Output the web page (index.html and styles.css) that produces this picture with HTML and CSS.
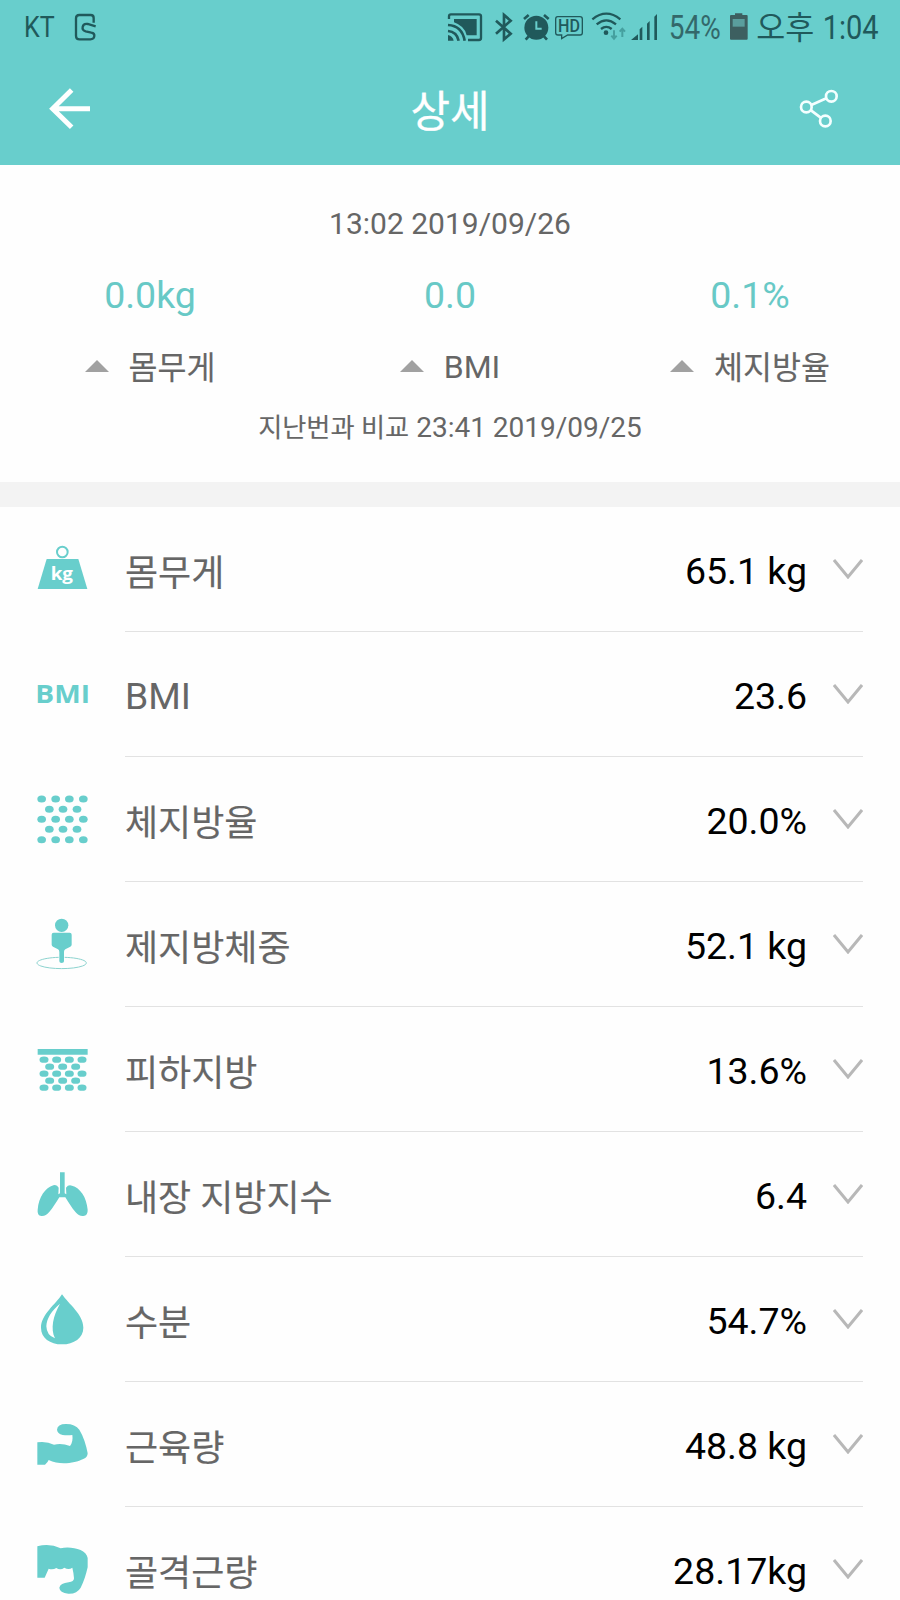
FILE: index.html
```html
<!DOCTYPE html>
<html lang="ko">
<head>
<meta charset="utf-8">
<title>상세</title>
<link rel="stylesheet" href="styles.css">
</head>
<body>
<header class="top">
  <div class="status">
    <svg class="status-left" viewBox="0 0 300 165" width="100" height="55">
      <text x="72" y="112" font-size="90" textLength="92" lengthAdjust="spacingAndGlyphs">KT</text>
      <path class="line" stroke-width="7" d="M281 68V54Q281 45 272 45H238Q228 45 228 55V107Q228 118 239 118H271Q282 118 283 108Q284 100 274 98L257 94Q246 91 248 81Q250 70 263 72L287 79"/>
    </svg>
    <svg class="status-right" viewBox="0 0 1380 165" width="460" height="55">
      <path class="line" stroke-width="7" d="M27 57V49Q27 43 33 43H117Q123 43 123 49V114Q123 120 117 120H84"/>
      <path d="M42 57H110V106H80Q74 78 42 67z"/>
      <path class="line" stroke-width="8" d="M24 75Q66 77 74 122M24 93Q50 95 56 122"/>
      <path d="M24 105Q38 108 41 122H24z"/>
      <path class="line" stroke-width="8" d="M168 62L212 101L192 118V45L212 62L168 101"/>
      <circle cx="289" cy="83" r="36"/>
      <path class="line" stroke-width="8" d="M252 57L266 45M312 45L326 57M266 109L257 119M312 109L321 119"/>
      <path fill="none" stroke="#68cecc" stroke-width="6" d="M289 64V86H305"/>
      <path class="line" stroke-width="4" d="M353 50H420Q427 50 427 57V98Q427 105 420 105H383L365 116V105H354Q347 105 347 98V57Q347 50 353 50z"/>
      <text x="354" y="96" font-size="54" font-weight="500" textLength="66" lengthAdjust="spacingAndGlyphs">HD</text>
      <path class="line" stroke-width="7" d="M457 58Q499 24 541 58M470 73Q499 49 528 73M483 87Q499 74 515 87"/>
      <circle cx="498" cy="98" r="7"/>
      <path class="line traffic" stroke-width="6" d="M522 91V116M514 107L522 116L530 107M547 111V86M539 95L547 86L555 95"/>
      <path d="M573 120L594 103V120zM599 88L607 80V120H599zM621 71L629 63V120H621zM643 50L651 42V120H643z"/>
      <text class="pct" x="686" y="118" font-size="101" textLength="156" lengthAdjust="spacingAndGlyphs">54%</text>
      <path fill="#3d5f60" d="M885 45V40H907V45H920Q923 45 923 48V116Q923 119 920 119H873Q870 119 870 116V48Q870 45 873 45z"/>
      <path fill="#5a9e9d" d="M878 57H914V80H878z"/>
      <text x="949" y="118" font-size="94" textLength="174" lengthAdjust="spacingAndGlyphs">오후</text>
      <text x="1148" y="118" font-size="101" textLength="168" lengthAdjust="spacingAndGlyphs">1:04</text>
    </svg>
  </div>
  <nav class="bar">
    <svg class="back" viewBox="147 264 126 126" width="42" height="42"><path d="M270 326H162M215 270L158 326L215 382"/></svg>
    <h1 class="title">상세</h1>
    <svg class="share" viewBox="417 267 120 120" width="40" height="40"><circle cx="514" cy="289" r="16"/><circle cx="439" cy="321" r="16"/><circle cx="496" cy="363" r="16"/><path d="M454 315L499 295M453 331L482 353"/></svg>
  </nav>
</header>

<section class="summary">
  <p class="time">13:02 2019/09/26</p>
  <div class="deltas">
    <div class="delta"><span class="num">0.0kg</span><span class="name"><i class="up"></i><span class="ko">몸무게</span></span></div>
    <div class="delta"><span class="num">0.0</span><span class="name"><i class="up"></i><span class="en">BMI</span></span></div>
    <div class="delta"><span class="num">0.1%</span><span class="name"><i class="up"></i><span class="ko">체지방율</span></span></div>
  </div>
  <p class="compare"><span class="prev">지난번과 비교</span> 23:41 2019/09/25</p>
</section>

<main class="list">
  <div class="row">
    <svg class="icon" viewBox="48 33 162 162"><circle class="ring" cx="127" cy="66" r="16"/><path d="M80 87H175L202 177H53z"/><text class="kg" x="92" y="150" textLength="67" lengthAdjust="spacingAndGlyphs">kg</text></svg>
    <div class="body"><span class="label">몸무게</span><span class="value">65.1 kg</span><svg class="chev" viewBox="0 0 30 20"><path d="M1 1L15 18L29 1"/></svg></div>
  </div>
  <div class="row">
    <svg class="icon" viewBox="48 33 162 162"><text class="bmi" x="46" y="144" textLength="164" lengthAdjust="spacingAndGlyphs">BMI</text></svg>
    <div class="body"><span class="label latin">BMI</span><span class="value">23.6</span><svg class="chev" viewBox="0 0 30 20"><path d="M1 1L15 18L29 1"/></svg></div>
  </div>
  <div class="row">
    <svg class="icon" viewBox="48 33 162 162">
      <defs><ellipse id="dot" rx="13" ry="10.5"/><ellipse id="cell" rx="13.5" ry="9.6"/>
        <g id="d4"><use href="#dot" x="65"/><use href="#dot" x="107"/><use href="#dot" x="148"/><use href="#dot" x="190"/></g>
        <g id="d3"><use href="#dot" x="88"/><use href="#dot" x="129"/><use href="#dot" x="171"/></g>
        <g id="c4"><use href="#cell" x="72"/><use href="#cell" x="110"/><use href="#cell" x="148"/><use href="#cell" x="186"/></g>
        <g id="c3"><use href="#cell" x="89"/><use href="#cell" x="128"/><use href="#cell" x="167"/></g>
      </defs>
      <use href="#d4" y="57"/><use href="#d3" y="88"/><use href="#d4" y="118"/><use href="#d3" y="148"/><use href="#d4" y="179"/>
    </svg>
    <div class="body"><span class="label">체지방율</span><span class="value">20.0%</span><svg class="chev" viewBox="0 0 30 20"><path d="M1 1L15 18L29 1"/></svg></div>
  </div>
  <div class="row">
    <svg class="icon" viewBox="48 33 162 162"><circle cx="125" cy="61" r="20"/><path d="M101 83H149Q155 83 155 89V119Q155 122 151 125L136 133Q132 135 132 141V169Q132 174 125 174T118 169V141Q118 135 114 133L99 125Q95 122 95 119V89Q95 83 101 83z"/><path class="orbit" d="M116 157A74 17 0 1 0 134 157"/></svg>
    <div class="body"><span class="label">제지방체중</span><span class="value">52.1 kg</span><svg class="chev" viewBox="0 0 30 20"><path d="M1 1L15 18L29 1"/></svg></div>
  </div>
  <div class="row">
    <svg class="icon" viewBox="48 33 162 162"><path d="M53 57H203V74H53z"/><use href="#c4" y="89"/><use href="#c3" y="110"/><use href="#c4" y="131"/><use href="#c3" y="152"/><use href="#c4" y="173"/></svg>
    <div class="body"><span class="label">피하지방</span><span class="value">13.6%</span><svg class="chev" viewBox="0 0 30 20"><path d="M1 1L15 18L29 1"/></svg></div>
  </div>
  <div class="row">
    <svg class="icon" viewBox="48 33 162 162"><path d="M120 52H134V115L139 118L138 98Q145 88 156 92C180 98 200 126 203 164Q204 182 190 183Q176 184 167 172C155 158 145 142 136 127H118C109 142 99 158 87 172Q78 184 64 183Q51 181 53 164C56 126 76 98 100 91Q111 88 116 98L115 118L120 115z"/></svg>
    <div class="body"><span class="label">내장 지방지수</span><span class="value">6.4</span><svg class="chev" viewBox="0 0 30 20"><path d="M1 1L15 18L29 1"/></svg></div>
  </div>
  <div class="row">
    <svg class="icon" viewBox="48 33 162 162"><path d="M126 43C146 72 190 104 190 143C190 174 162 193 126 193S63 174 63 143C63 104 108 72 126 43z"/><path class="shine" d="M120 71C94 93 80 115 79 139Q80 167 105 175C91 146 99 108 120 71z"/></svg>
    <div class="body"><span class="label">수분</span><span class="value">54.7%</span><svg class="chev" viewBox="0 0 30 20"><path d="M1 1L15 18L29 1"/></svg></div>
  </div>
  <div class="row">
    <svg class="icon" viewBox="48 33 162 162"><path d="M52 112Q80 108 102 119Q125 113 150 123Q160 110 157 90Q142 92 128 90Q112 86 111 74Q112 57 138 57Q166 57 178 74C190 94 199 120 203 145Q203 157 190 162C165 174 120 182 86 165Q84 171 75 179H52z"/></svg>
    <div class="body"><span class="label">근육량</span><span class="value">48.8 kg</span><svg class="chev" viewBox="0 0 30 20"><path d="M1 1L15 18L29 1"/></svg></div>
  </div>
  <div class="row">
    <svg class="icon" viewBox="48 33 162 162"><path d="M52 49Q88 38 122 55C152 48 199 58 203 84V112C198 132 192 155 182 173Q171 192 145 191Q119 188 118 173Q121 160 146 157Q162 155 162 145Q161 129 157 113Q146 121 133 113Q121 122 109 114Q98 120 86 116L74 143H52z"/></svg>
    <div class="body"><span class="label">골격근량</span><span class="value">28.17kg</span><svg class="chev" viewBox="0 0 30 20"><path d="M1 1L15 18L29 1"/></svg></div>
  </div>
</main>
</body>
</html>
```
FILE: styles.css
```css
* { box-sizing: border-box; }
html, body { margin: 0; height: 1600px; overflow: hidden; }
body {
  width: 900px;
  background: #fefefe;
  color: #666;
  font-family: Roboto, "Noto Sans CJK KR", sans-serif;
}
p, h1 { margin: 0; font-weight: 400; }
svg { display: block; flex: none; }

.top { height: 165px; background: #68cecc; }
.status { display: flex; justify-content: space-between; height: 55px; }
.status svg { fill: #20595b; }
.status .line { fill: none; stroke: #20595b; }
.status .traffic { stroke: #45a09f; }
.status .pct { fill: #33686a; }
.bar { display: flex; align-items: center; justify-content: space-between; height: 108px; padding: 0 61px 0 49px; }
.back path { fill: none; stroke: #fff; stroke-width: 15; }
.share { fill: none; stroke: #f4ffff; stroke-width: 8; }
.title { padding: 5px 0 0 10px; color: #fff; font-size: 43px; line-height: 60px; -webkit-text-stroke: .3px; }

.summary { height: 317px; padding-top: 39px; text-align: center; }
.time { font-size: 30px; line-height: 40px; }
.deltas { display: grid; grid-template-columns: repeat(3, 1fr); margin-top: 26px; }
.delta { display: flex; flex-direction: column; align-items: center; }
.num { color: #68c9c6; font-size: 37.5px; line-height: 50px; }
.name { display: flex; align-items: center; gap: 20px; margin-top: 22px; font-size: 31.5px; line-height: 48px; }
.ko { padding-top: 3px; height: 48px; -webkit-text-stroke: .15px; }
.en { padding-top: 1px; height: 48px; font-size: 32px; }
.up { border: 12.5px solid transparent; border-top: 0; border-bottom: 12px solid #a1a1a1; }
.compare { margin-top: 20px; font-size: 28px; line-height: 36px; }
.prev { font-size: 26.2px; -webkit-text-stroke: .15px; }

.list { height: 1118px; border-top: 25px solid #f3f3f3; overflow: hidden; }
.row { display: flex; align-items: flex-start; height: 125px; padding: 0 37px 0 36px; }
.icon { width: 54px; height: 54px; margin: 34px 35px 0 0; fill: #68cecc; }
.body { display: flex; flex: 1; align-items: center; height: 125px; border-bottom: 1px solid #e2e2e2; }
.label { flex: 1; padding-top: 9px; font-size: 36px; line-height: 50px; -webkit-text-stroke: .15px; }
.latin { padding-top: 3px; font-size: 37.3px; -webkit-text-stroke: 0; }
.value { color: #000; font-size: 37.5px; line-height: 50px; padding-top: 3px; margin-right: 26px; }
.chev { width: 30px; height: 20px; fill: none; stroke: #b8b8b8; stroke-width: 3; }
.ring { fill: none; stroke: #68cecc; stroke-width: 6; }
.kg { fill: #fff; font: 700 53px "Open Sans", sans-serif; }
.bmi { font: 700 77px "Open Sans", sans-serif; }
.orbit { fill: none; stroke: #8cd3cf; stroke-width: 3; }
.shine { fill: #fff; }
```
